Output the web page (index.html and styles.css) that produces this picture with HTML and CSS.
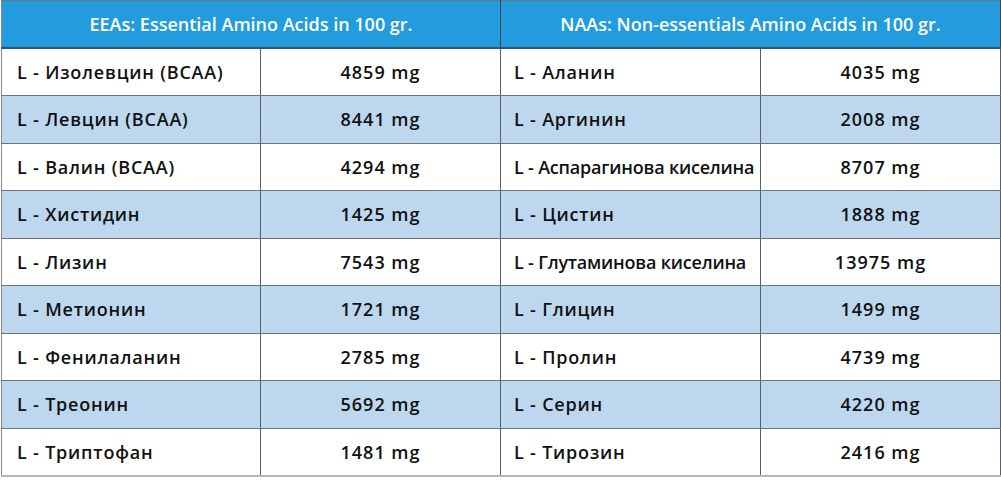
FILE: index.html
```html
<!DOCTYPE html>
<html lang="bg">
<head>
<meta charset="utf-8">
<title>Amino Acids</title>
<link rel="stylesheet" href="styles.css">
</head>
<body>
<table class="amino">
  <colgroup>
    <col class="c-name-l"><col class="c-val-l"><col class="c-name-r"><col class="c-val-r">
  </colgroup>
  <thead>
    <tr class="head">
      <th colspan="2">EEAs: Essential Amino Acids in 100 gr.</th>
      <th colspan="2">NAAs: Non-essentials Amino Acids in 100 gr.</th>
    </tr>
  </thead>
  <tbody>
    <tr><td class="name">L - Изолевцин (BCAA)</td><td class="val">4859 mg</td><td class="name right">L - Аланин</td><td class="val">4035 mg</td></tr>
    <tr class="alt"><td class="name">L - Левцин (BCAA)</td><td class="val">8441 mg</td><td class="name right">L - Аргинин</td><td class="val">2008 mg</td></tr>
    <tr><td class="name">L - Валин (BCAA)</td><td class="val">4294 mg</td><td class="name right narrow">L - Аспарагинова киселина</td><td class="val">8707 mg</td></tr>
    <tr class="alt"><td class="name">L - Хистидин</td><td class="val">1425 mg</td><td class="name right">L - Цистин</td><td class="val">1888 mg</td></tr>
    <tr><td class="name">L - Лизин</td><td class="val">7543 mg</td><td class="name right narrow">L - Глутаминова киселина</td><td class="val">13975 mg</td></tr>
    <tr class="alt"><td class="name">L - Метионин</td><td class="val">1721 mg</td><td class="name right">L - Глицин</td><td class="val">1499 mg</td></tr>
    <tr><td class="name">L - Фенилаланин</td><td class="val">2785 mg</td><td class="name right">L - Пролин</td><td class="val">4739 mg</td></tr>
    <tr class="alt"><td class="name">L - Треонин</td><td class="val">5692 mg</td><td class="name right">L - Серин</td><td class="val">4220 mg</td></tr>
    <tr><td class="name">L - Триптофан</td><td class="val">1481 mg</td><td class="name right">L - Тирозин</td><td class="val">2416 mg</td></tr>
  </tbody>
</table>
</body>
</html>
```
FILE: styles.css
```css
html, body {
  margin: 0;
  padding: 0;
  background: #ffffff;
}

body {
  font-family: "Open Sans", "Noto Sans", "Liberation Sans", sans-serif;
  color: #111111;
}

.amino {
  margin-left: 1px;
  width: 999px;
  border-collapse: collapse;
  table-layout: fixed;
  border-top: 1px solid #6b7a86;
  border-left: 1px solid #8a8a8a;
  border-right: 1px solid #8a8a8a;
  border-bottom: 2px solid #b5b5b5;
}

.c-name-l { width: 259px; }
.c-val-l { width: 240px; }
.c-name-r { width: 260px; }
.c-val-r { width: 240px; }

.head th {
  height: 46px;
  padding: 0;
  background: #229cdd;
  color: #ffffff;
  font-size: 18px;
  font-weight: 600;
  text-align: center;
  vertical-align: middle;
  border-bottom: 2px solid #2f5670;
  border-right: 1px solid #3a4750;
}

.amino tbody tr {
  height: 47.5px;
}

.amino td {
  padding: 0;
  font-size: 18px;
  font-weight: 600;
  border-right: 1px solid #5a5f66;
  border-bottom: 1px solid #6f747a;
  vertical-align: middle;
  white-space: nowrap;
}

.amino tr.alt td {
  background: #bdd7ee;
}

.amino td.name {
  padding-left: 15px;
  text-align: left;
  letter-spacing: 0.8px;
}

.amino td.name.right {
  padding-left: 13px;
}

.amino td.name.narrow {
  letter-spacing: -0.2px;
}

.amino td.val {
  text-align: center;
  letter-spacing: 1px;
}
```
